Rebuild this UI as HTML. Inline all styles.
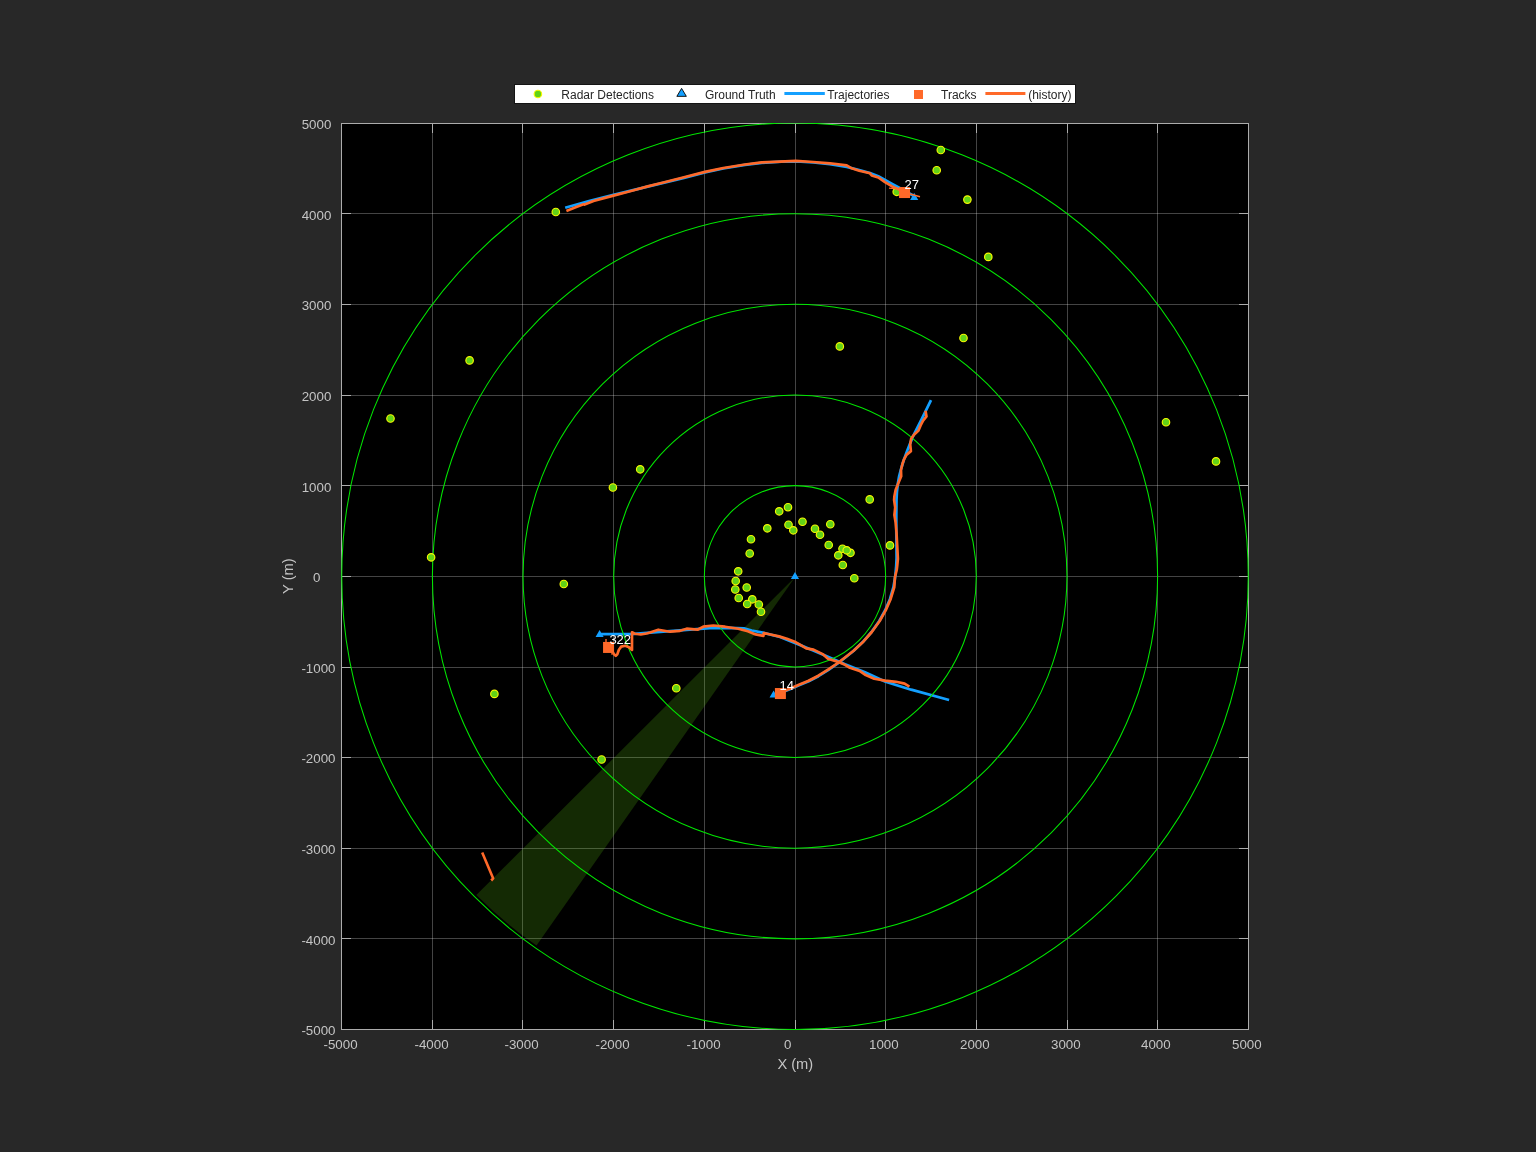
<!DOCTYPE html>
<html lang="en"><head><meta charset="utf-8"><title>Radar Tracking Display</title>
<style>
html,body{margin:0;padding:0;background:#282828;}
body{width:1536px;height:1152px;overflow:hidden;position:relative;font-family:"Liberation Sans",sans-serif;}
svg{position:absolute;left:0;top:0;display:block;will-change:transform;}
text{font-family:"Liberation Sans",sans-serif;}
.tl{font-size:13.33px;fill:#c4c4c4;}
.al{font-size:14.67px;fill:#c4c4c4;}
.lg{font-size:12px;fill:#262626;}
.tk{font-size:13px;fill:#ffffff;}
</style></head><body>
<svg width="1536" height="1152" viewBox="0 0 1536 1152">
<rect x="0" y="0" width="1536" height="1152" fill="#282828"/>
<rect x="341" y="123" width="908" height="907" fill="#000000"/>
<defs><clipPath id="ax"><rect x="341" y="123" width="908" height="907"/></clipPath></defs>
<g stroke="#ffffff" stroke-opacity="0.265" stroke-width="1" shape-rendering="crispEdges">
<line x1="432.5" y1="124" x2="432.5" y2="1029"/>
<line x1="522.5" y1="124" x2="522.5" y2="1029"/>
<line x1="613.5" y1="124" x2="613.5" y2="1029"/>
<line x1="704.5" y1="124" x2="704.5" y2="1029"/>
<line x1="795.5" y1="124" x2="795.5" y2="1029"/>
<line x1="885.5" y1="124" x2="885.5" y2="1029"/>
<line x1="976.5" y1="124" x2="976.5" y2="1029"/>
<line x1="1067.5" y1="124" x2="1067.5" y2="1029"/>
<line x1="1157.5" y1="124" x2="1157.5" y2="1029"/>
<line x1="342" y1="213.5" x2="1248" y2="213.5"/>
<line x1="342" y1="304.5" x2="1248" y2="304.5"/>
<line x1="342" y1="395.5" x2="1248" y2="395.5"/>
<line x1="342" y1="485.5" x2="1248" y2="485.5"/>
<line x1="342" y1="576.5" x2="1248" y2="576.5"/>
<line x1="342" y1="667.5" x2="1248" y2="667.5"/>
<line x1="342" y1="757.5" x2="1248" y2="757.5"/>
<line x1="342" y1="848.5" x2="1248" y2="848.5"/>
<line x1="342" y1="938.5" x2="1248" y2="938.5"/>
</g>
<g stroke="#acacac" stroke-width="1" shape-rendering="crispEdges">
<line x1="432.5" y1="1029" x2="432.5" y2="1020"/>
<line x1="432.5" y1="124" x2="432.5" y2="133"/>
<line x1="522.5" y1="1029" x2="522.5" y2="1020"/>
<line x1="522.5" y1="124" x2="522.5" y2="133"/>
<line x1="613.5" y1="1029" x2="613.5" y2="1020"/>
<line x1="613.5" y1="124" x2="613.5" y2="133"/>
<line x1="704.5" y1="1029" x2="704.5" y2="1020"/>
<line x1="704.5" y1="124" x2="704.5" y2="133"/>
<line x1="795.5" y1="1029" x2="795.5" y2="1020"/>
<line x1="795.5" y1="124" x2="795.5" y2="133"/>
<line x1="885.5" y1="1029" x2="885.5" y2="1020"/>
<line x1="885.5" y1="124" x2="885.5" y2="133"/>
<line x1="976.5" y1="1029" x2="976.5" y2="1020"/>
<line x1="976.5" y1="124" x2="976.5" y2="133"/>
<line x1="1067.5" y1="1029" x2="1067.5" y2="1020"/>
<line x1="1067.5" y1="124" x2="1067.5" y2="133"/>
<line x1="1157.5" y1="1029" x2="1157.5" y2="1020"/>
<line x1="1157.5" y1="124" x2="1157.5" y2="133"/>
<line x1="342" y1="213.5" x2="351" y2="213.5"/>
<line x1="1248" y1="213.5" x2="1239" y2="213.5"/>
<line x1="342" y1="304.5" x2="351" y2="304.5"/>
<line x1="1248" y1="304.5" x2="1239" y2="304.5"/>
<line x1="342" y1="395.5" x2="351" y2="395.5"/>
<line x1="1248" y1="395.5" x2="1239" y2="395.5"/>
<line x1="342" y1="485.5" x2="351" y2="485.5"/>
<line x1="1248" y1="485.5" x2="1239" y2="485.5"/>
<line x1="342" y1="576.5" x2="351" y2="576.5"/>
<line x1="1248" y1="576.5" x2="1239" y2="576.5"/>
<line x1="342" y1="667.5" x2="351" y2="667.5"/>
<line x1="1248" y1="667.5" x2="1239" y2="667.5"/>
<line x1="342" y1="757.5" x2="351" y2="757.5"/>
<line x1="1248" y1="757.5" x2="1239" y2="757.5"/>
<line x1="342" y1="848.5" x2="351" y2="848.5"/>
<line x1="1248" y1="848.5" x2="1239" y2="848.5"/>
<line x1="342" y1="938.5" x2="351" y2="938.5"/>
<line x1="1248" y1="938.5" x2="1239" y2="938.5"/>
</g>
<rect x="341.5" y="123.5" width="907" height="906" fill="none" stroke="#acacac" stroke-width="1" shape-rendering="crispEdges"/>
<path d="M795.2 577.0 L476.3 895.1 A451 451 0 0 0 536.5 945.6 Z" fill="#64d214" fill-opacity="0.2"/>
<g clip-path="url(#ax)">
<polyline points="565.2,207.8 590.0,200.8 613.5,194.9 631.0,190.6 647.7,186.6 664.3,182.7 684.0,177.9 705.0,172.4 723.3,168.5 745.0,164.9 761.7,162.8 781.7,161.6 796.7,161.3 813.3,162.5 830.0,164.2 846.7,166.9 859.2,170.0 870.0,173.0 878.3,176.3 885.0,179.9 891.7,183.6 899.6,188.0 914.4,196.3" fill="none" stroke="#14a0ff" stroke-width="2.75" stroke-linejoin="round" stroke-linecap="butt"/>
<polyline points="931.0,400.1 921.7,419.2 912.6,437.2 907.1,451.1 903.8,460.0 901.3,468.0 899.2,476.0 897.8,484.0 896.9,492.0 896.5,500.0 896.3,515.0 896.3,530.0 896.5,545.0 896.6,558.0 896.2,566.0 895.3,576.0 893.5,587.0 890.0,599.0 885.3,610.0 879.3,621.0 871.5,632.0 863.0,641.8 853.4,651.0 845.0,657.8 837.8,663.4 828.1,670.1 818.4,676.2 808.7,681.3 799.0,685.3 790.5,688.9 780.0,693.0 774.6,694.8" fill="none" stroke="#14a0ff" stroke-width="2.75" stroke-linejoin="round" stroke-linecap="butt"/>
<polyline points="600.2,634.2 631.0,634.1 650.0,632.6 680.0,630.4 700.0,628.8 713.3,628.0 730.0,627.9 743.9,628.4 751.7,630.5 762.7,632.6 780.0,637.0 796.7,643.6 812.0,650.0 825.6,655.7 845.0,664.2 865.0,672.3 885.6,681.7 911.2,689.7 949.1,700.0" fill="none" stroke="#14a0ff" stroke-width="2.75" stroke-linejoin="round" stroke-linecap="butt"/>
<path d="M914.20 192.80 L918.25 199.90 L910.15 199.90 Z" fill="#14a0ff"/>
<path d="M773.60 690.40 L777.65 697.50 L769.55 697.50 Z" fill="#14a0ff"/>
<path d="M599.60 629.90 L603.65 637.00 L595.55 637.00 Z" fill="#14a0ff"/>
<path d="M794.95 572.00 L799.00 579.10 L790.90 579.10 Z" fill="#14a0ff"/>
<g fill="none" stroke="#00e600" stroke-width="1.05">
<circle cx="795.00" cy="576.25" r="90.65"/>
<circle cx="795.00" cy="576.25" r="181.30"/>
<circle cx="795.00" cy="576.25" r="271.95"/>
<circle cx="795.00" cy="576.25" r="362.60"/>
<circle cx="795.00" cy="576.25" r="453.25"/>
</g>
<g fill="#62d216" stroke="#f8f800" stroke-width="1.15">
<circle cx="555.8" cy="212.0" r="3.75"/>
<circle cx="940.8" cy="150.0" r="3.75"/>
<circle cx="936.7" cy="170.2" r="3.75"/>
<circle cx="967.4" cy="199.6" r="3.75"/>
<circle cx="988.3" cy="256.9" r="3.75"/>
<circle cx="896.7" cy="191.8" r="3.75"/>
<circle cx="869.7" cy="499.4" r="3.75"/>
<circle cx="788.0" cy="507.2" r="3.75"/>
<circle cx="779.2" cy="511.3" r="3.75"/>
<circle cx="802.5" cy="521.7" r="3.75"/>
<circle cx="788.5" cy="524.7" r="3.75"/>
<circle cx="793.3" cy="530.3" r="3.75"/>
<circle cx="767.3" cy="528.3" r="3.75"/>
<circle cx="830.3" cy="524.2" r="3.75"/>
<circle cx="815.0" cy="528.7" r="3.75"/>
<circle cx="820.0" cy="534.7" r="3.75"/>
<circle cx="828.7" cy="545.0" r="3.75"/>
<circle cx="751.0" cy="539.2" r="3.75"/>
<circle cx="749.7" cy="553.5" r="3.75"/>
<circle cx="842.5" cy="548.7" r="3.75"/>
<circle cx="850.5" cy="552.8" r="3.75"/>
<circle cx="846.7" cy="550.3" r="3.75"/>
<circle cx="838.3" cy="555.3" r="3.75"/>
<circle cx="842.8" cy="565.0" r="3.75"/>
<circle cx="854.3" cy="578.2" r="3.75"/>
<circle cx="890.0" cy="545.4" r="3.75"/>
<circle cx="738.2" cy="571.3" r="3.75"/>
<circle cx="735.7" cy="581.0" r="3.75"/>
<circle cx="735.3" cy="589.5" r="3.75"/>
<circle cx="746.7" cy="587.5" r="3.75"/>
<circle cx="738.7" cy="598.0" r="3.75"/>
<circle cx="752.3" cy="599.3" r="3.75"/>
<circle cx="747.2" cy="604.0" r="3.75"/>
<circle cx="758.8" cy="604.5" r="3.75"/>
<circle cx="761.0" cy="611.7" r="3.75"/>
<circle cx="563.8" cy="584.0" r="3.75"/>
<circle cx="494.4" cy="693.9" r="3.75"/>
<circle cx="676.3" cy="688.2" r="3.75"/>
<circle cx="601.6" cy="759.5" r="3.75"/>
<circle cx="469.6" cy="360.4" r="3.75"/>
<circle cx="390.5" cy="418.5" r="3.75"/>
<circle cx="431.1" cy="557.3" r="3.75"/>
<circle cx="612.9" cy="487.5" r="3.75"/>
<circle cx="640.2" cy="469.3" r="3.75"/>
<circle cx="839.8" cy="346.4" r="3.75"/>
<circle cx="963.5" cy="338.0" r="3.75"/>
<circle cx="1166.0" cy="422.2" r="3.75"/>
<circle cx="1216.0" cy="461.4" r="3.75"/>
</g>
<polyline points="566.4,211.0 575.0,207.6 583.5,204.3 584.6,204.6 593.5,201.0 613.5,195.6 631.0,191.0 647.7,186.4 664.3,182.2 684.0,177.2 705.0,171.9 723.3,168.0 745.0,164.5 761.7,162.4 780.0,161.6 795.8,160.8 813.3,162.0 830.0,163.3 846.7,165.4 851.7,168.3 859.2,170.8 870.0,173.3 871.7,175.4 878.3,177.5 885.0,182.1 891.7,186.2 899.2,189.6 904.4,192.6" fill="none" stroke="#ff6929" stroke-width="2.67" stroke-linejoin="round" stroke-linecap="butt"/>
<polyline points="889.0,188.2 894.6,188.7" fill="none" stroke="#ff6929" stroke-width="1.2" stroke-linejoin="round" stroke-linecap="butt"/>
<polyline points="925.5,410.8 926.5,416.4 923.1,420.6 920.6,425.4 918.5,430.6 914.0,434.8 911.2,438.6 910.2,444.2 910.9,451.1 906.7,454.6 904.0,459.4 902.5,463.8 901.0,470.0 901.2,476.2 898.1,483.8 895.6,490.0 894.4,496.2 894.1,500.0 895.2,507.5 894.4,515.0 895.6,522.5 896.5,532.5 897.2,545.0 897.9,558.8 897.2,566.2 896.7,570.0 895.0,577.0 894.3,587.0 890.6,599.2 885.8,610.1 879.7,621.0 871.8,632.0 863.3,641.7 853.6,650.8 845.0,657.5 837.8,663.0 828.0,669.6 818.3,675.7 808.6,680.8 798.9,684.8 790.4,688.5 784.3,690.9 780.5,692.5" fill="none" stroke="#ff6929" stroke-width="2.67" stroke-linejoin="round" stroke-linecap="butt"/>
<polyline points="613.0,652.4 613.8,654.0 615.8,655.9 617.3,654.4 618.9,649.7 621.2,646.6 625.2,645.8 629.1,647.3 632.0,649.9 632.0,632.3 634.9,633.7 640.8,634.5 646.6,633.5 650.0,632.5 658.3,629.7 670.0,631.7 680.0,630.8 686.7,628.7 697.5,629.7 703.3,626.7 713.3,625.5 725.0,626.7 738.3,628.7 747.8,631.3 755.6,634.4 763.4,635.9 763.8,633.0 770.5,634.5 779.0,636.4 786.9,638.7 794.7,641.8 800.0,644.6 806.2,648.4 813.5,649.6 823.2,654.4 828.0,658.7 839.0,662.3 845.0,664.8 849.9,667.8 859.6,670.9 865.7,675.1 874.2,678.7 885.1,680.6 896.1,681.8 904.6,683.6 909.4,686.6" fill="none" stroke="#ff6929" stroke-width="2.67" stroke-linejoin="round" stroke-linecap="butt"/>
<polyline points="606.0,639.0 606.0,643.0" fill="none" stroke="#ff6929" stroke-width="1.4" stroke-linejoin="round" stroke-linecap="butt"/>
<polyline points="482.2,852.6 493.2,878.4 491.2,880.5" fill="none" stroke="#ff6929" stroke-width="2.6" stroke-linejoin="round" stroke-linecap="butt"/>
<polyline points="904.5,192.5 920.0,196.8" fill="none" stroke="#ff6929" stroke-width="1.5" stroke-linejoin="round" stroke-linecap="butt"/>
<polyline points="611.9,652.0 611.9,654.8" fill="none" stroke="#ff6929" stroke-width="1.2" stroke-linejoin="round" stroke-linecap="butt"/>
<rect x="899.05" y="187.05" width="11" height="11" fill="#ff6929"/>
<rect x="774.90" y="688.05" width="11" height="11" fill="#ff6929"/>
<rect x="603.05" y="641.95" width="11" height="11" fill="#ff6929"/>
</g>
<text class="tk" x="904.5" y="189.0">27</text>
<text class="tk" x="779.6" y="690.0">14</text>
<text class="tk" x="609.4" y="643.9">322</text>
<text class="tl" text-anchor="middle" x="340.50" y="1049.1">-5000</text>
<text class="tl" text-anchor="middle" x="431.50" y="1049.1">-4000</text>
<text class="tl" text-anchor="middle" x="521.50" y="1049.1">-3000</text>
<text class="tl" text-anchor="middle" x="612.50" y="1049.1">-2000</text>
<text class="tl" text-anchor="middle" x="703.50" y="1049.1">-1000</text>
<text class="tl" text-anchor="middle" x="787.75" y="1049.1">0</text>
<text class="tl" text-anchor="middle" x="883.80" y="1049.1">1000</text>
<text class="tl" text-anchor="middle" x="974.80" y="1049.1">2000</text>
<text class="tl" text-anchor="middle" x="1065.80" y="1049.1">3000</text>
<text class="tl" text-anchor="middle" x="1155.80" y="1049.1">4000</text>
<text class="tl" text-anchor="middle" x="1246.80" y="1049.1">5000</text>
<text class="tl" text-anchor="end" x="331.30" y="129.2">5000</text>
<text class="tl" text-anchor="end" x="331.30" y="219.8">4000</text>
<text class="tl" text-anchor="end" x="331.30" y="310.4">3000</text>
<text class="tl" text-anchor="end" x="331.30" y="400.9">2000</text>
<text class="tl" text-anchor="end" x="331.30" y="491.5">1000</text>
<text class="tl" text-anchor="end" x="320.50" y="582.1">0</text>
<text class="tl" text-anchor="end" x="335.50" y="672.7">-1000</text>
<text class="tl" text-anchor="end" x="335.50" y="763.3">-2000</text>
<text class="tl" text-anchor="end" x="335.50" y="853.9">-3000</text>
<text class="tl" text-anchor="end" x="335.50" y="944.5">-4000</text>
<text class="tl" text-anchor="end" x="335.50" y="1035.2">-5000</text>
<text class="al" text-anchor="middle" x="795.3" y="1069.1">X (m)</text>
<text class="al" text-anchor="middle" transform="translate(292.8,576.1) rotate(-90)">Y (m)</text>
<rect x="514.5" y="84.5" width="561" height="19" fill="#ffffff" stroke="#141414" stroke-width="1" shape-rendering="crispEdges"/>
<circle cx="537.9" cy="94" r="3.75" fill="#62d216" stroke="#f8f800" stroke-width="1.15"/>
<text class="lg" x="561.3" y="98.6">Radar Detections</text>
<path d="M681.60 88.40 L686.35 96.35 L676.85 96.35 Z" fill="#14a0ff" stroke="#000000" stroke-width="0.9" stroke-linejoin="miter"/>
<text class="lg" x="704.9" y="98.6">Ground Truth</text>
<rect x="784.4" y="92" width="40.4" height="3" fill="#14a0ff"/>
<text class="lg" x="827.2" y="98.6">Trajectories</text>
<rect x="914" y="90" width="9" height="9" fill="#ff6929"/>
<text class="lg" x="941" y="98.6">Tracks</text>
<rect x="985.4" y="92" width="40" height="3" fill="#ff6929"/>
<text class="lg" x="1028.2" y="98.6">(history)</text>
</svg>
</body></html>
